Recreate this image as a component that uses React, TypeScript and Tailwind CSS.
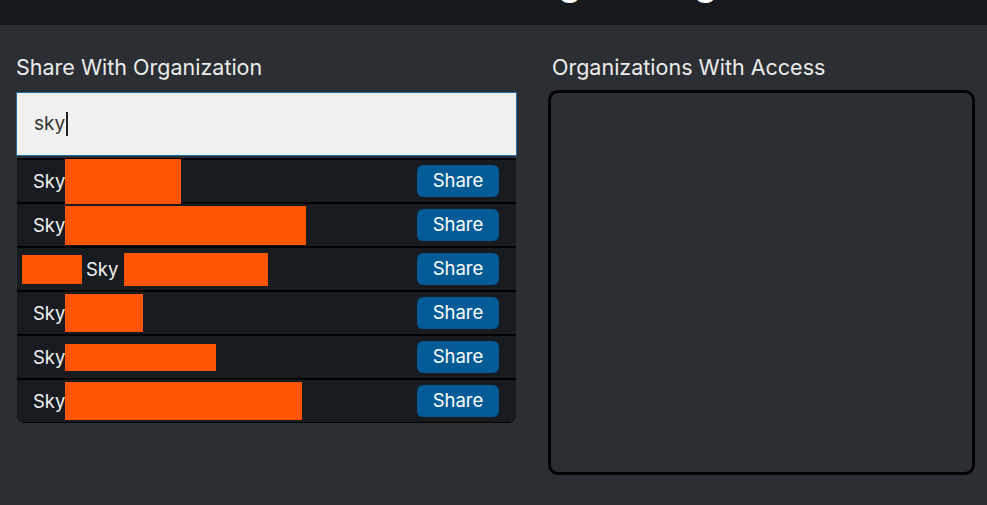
import React from "react";

// Redaction widths per row: [before, after]
const ROWS: { pre?: number; preH?: number; post: number; postH: number; gap?: boolean }[] = [
  { post: 116, postH: 45 },
  { post: 241, postH: 39 },
  { pre: 60, preH: 29, post: 144, postH: 33, gap: true },
  { post: 78, postH: 38 },
  { post: 151, postH: 27 },
  { post: 237, postH: 38 },
];

const FONT = { fontFamily: "Inter, 'Noto Sans', sans-serif" };

function ResultRow({ row }: { row: (typeof ROWS)[number] }) {
  return (
    <div className="flex h-[42px] items-center justify-between bg-[#181b1f] pr-[17px]">
      <div className={`flex items-center ${row.pre ? "pl-[5px]" : "pl-[16px]"}`}>
        {row.pre && (
          <span className="mr-[4px] block bg-[#ff5500]" style={{ width: row.pre, height: row.preH }} />
        )}
        <span className="text-[18.5px] leading-none text-[#f2f2f2]">Sky</span>
        <span
          className={`block bg-[#ff5500] ${row.gap ? "ml-[6px]" : ""}`}
          style={{ width: row.post, height: row.postH }}
        />
      </div>
      <button className="h-[32px] w-[82px] rounded-[6px] bg-[#025a96] text-[18.5px] text-white">Share</button>
    </div>
  );
}

export default function App() {
  return (
    <div className="min-h-[505px] w-full bg-[#2b2e33]" style={FONT}>
      {/* top bar, title mostly scrolled out of view */}
      <header className="h-[25px] overflow-hidden bg-[#171a1d]">
        <div className="-mt-[40px] pl-[443px] text-[37px] font-semibold leading-[44px] text-white">Sharing Settings</div>
      </header>

      <main className="flex gap-[31px] pl-[16px] pr-[12px] pt-[30px]">
        <section className="w-[501px] shrink-0">
          <h2 className="text-[21.5px] leading-[24px] text-[#ececec]">Share With Organization</h2>
          <div className="mt-[13px] flex h-[64px] items-center border border-[#1c6da6] bg-[#f0f0f0] pl-[17px]">
            <span className="text-[19px] text-[#333]">sky</span>
            <span className="ml-[1px] block h-[24px] w-[2px] bg-[#222]" />
          </div>
          <div className="mx-[1px] mt-[2px] flex flex-col gap-[2px] overflow-hidden rounded-b-[8px] bg-black pt-[2px] pb-[1px]">
            {ROWS.map((r, i) => (
              <ResultRow key={i} row={r} />
            ))}
          </div>
        </section>

        <section className="flex-1">
          <h2 className="pl-[4px] text-[21.5px] leading-[24px] text-[#ececec]">Organizations With Access</h2>
          <div className="mt-[11px] h-[385px] rounded-[10px] border-[3px] border-black bg-[#2b2e33]" />
        </section>
      </main>
    </div>
  );
}
